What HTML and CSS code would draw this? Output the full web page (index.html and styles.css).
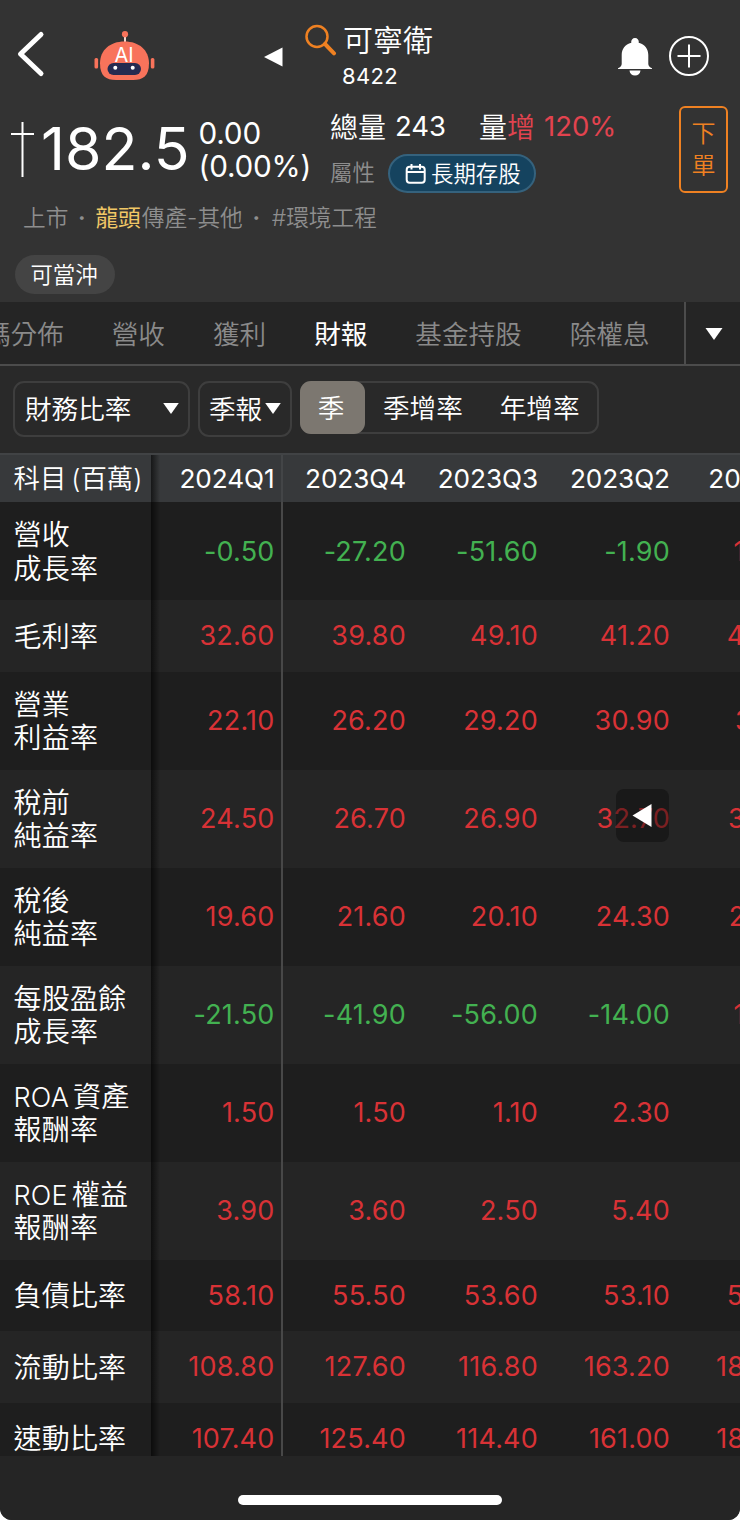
FILE: index.html
```html
<!DOCTYPE html>
<html lang="zh-Hant">
<head>
<meta charset="utf-8">
<title>可寧衛 8422</title>
<link rel="stylesheet" href="styles.css">
</head>
<body>
<div class="screen">
  <header class="top">
    <div class="nav">
      <svg class="back" width="30" height="48" viewBox="0 0 30 48"><path d="M26 4.500 5.500 24 26 43.500" fill="none" stroke="#fff" stroke-width="5" stroke-linecap="round" stroke-linejoin="round"/></svg>
      <svg class="robot" width="62" height="52" viewBox="0 0 62 52">
        <path d="M32 6v8" stroke="#f5d9d0" stroke-width="2"/>
        <circle cx="32" cy="4.200" r="3.100" fill="#f8735b"/>
        <rect x="1.500" y="28" width="3.600" height="10.500" rx="1.500" fill="#f8735b"/>
        <rect x="57.800" y="28" width="3.600" height="10.500" rx="1.500" fill="#f8735b"/>
        <path d="M31.500 11.500C46 11.500 56 20 56 33.500 56 46 50 50 40 50H23C13 50 7 46 7 33.500 7 20 17 11.500 31.500 11.500Z" fill="#f8735b"/>
        <text x="31" y="32" text-anchor="middle" class="robot-text">AI</text>
        <rect x="14.500" y="33" width="33.500" height="12" rx="6" fill="#262b50"/>
        <circle cx="22.300" cy="37.800" r="2" fill="#fff"/><circle cx="39.700" cy="37.800" r="2" fill="#fff"/>
      </svg>
      <svg class="prev" width="20" height="20" viewBox="0 0 20 20"><path d="M1 10 19.500 .5V19.500Z" fill="#fff"/></svg>
      <svg class="search" width="32" height="32" viewBox="0 0 32 32"><circle cx="12" cy="12.500" r="10.500" fill="none" stroke="#ef8122" stroke-width="2.500"/><path d="m20 20 9 9.300" stroke="#ef8122" stroke-width="4" stroke-linecap="round"/></svg>
      <div class="title"><div class="name">可寧衛</div><div class="code">8422</div></div>
      <svg class="bell" width="36" height="40" viewBox="0 0 36 40"><path d="M18 1a3.800 3.800 0 0 1 3.700 4.700C28 7.500 31.300 12 31.300 18v9c0 2 1.500 3.200 3.700 4.200v.9H1v-.9c2.200-1 3.700-2.200 3.700-4.200v-9c0-6 3.300-10.500 9.600-12.300A3.800 3.800 0 0 1 18 1ZM12.500 33.500h11c-.3 3.200-2.500 5-5.500 5s-5.200-1.800-5.500-5Z" fill="#fff"/></svg>
      <svg class="plus" width="42" height="42" viewBox="0 0 42 42"><circle cx="21" cy="21" r="19" fill="none" stroke="#fff" stroke-width="2"/><path d="M9.500 21h23M21 9.500v23" stroke="#fff" stroke-width="2"/></svg>
    </div>
    <div class="quote">
      <svg class="candle" width="24" height="56" viewBox="0 0 24 56"><path d="M0 12h23M11.500 0v55" stroke="#fff" stroke-width="2" fill="none"/></svg>
      <div class="price">182.5</div>
      <div class="change"><div>0.00</div><div class="pct">(0.00%)</div></div>
      <div class="facts">
        <div class="volume"><span>總量</span><span class="num">243</span><span class="vol-label">量</span><span class="up">增</span><span class="num up rate">120%</span></div>
        <div class="attr"><span class="attr-label">屬性</span>
          <span class="tag"><svg width="22" height="22" viewBox="0 0 22 22" fill="none" stroke="#fff" stroke-width="2"><rect x="1.700" y="3.700" width="18" height="16" rx="3"/><path d="M2 9h18M6.500 1v5.500M15 1v5.500"/></svg><span>長期存股</span></span>
        </div>
      </div>
      <button class="order"><span>下</span><span>單</span></button>
    </div>
    <div class="sector"><span>上市</span><i>·</i><b>龍頭</b><span>傳產-其他</span><i>·</i><span>#環境工程</span></div>
    <span class="chip">可當沖</span>
  </header>
  <nav class="tabs">
    <div class="tab-strip"><span>籌碼分佈</span><span>營收</span><span>獲利</span><span class="active">財報</span><span>基金持股</span><span>除權息</span></div>
    <div class="more"><svg width="18" height="12" viewBox="0 0 18 12"><path d="M.5 0h17L9 12Z" fill="#fff"/></svg></div>
  </nav>
  <div class="filters">
    <div class="select wide"><span>財務比率</span><svg width="16" height="11" viewBox="0 0 16 11"><path d="M.2 0h15.600L8 11Z" fill="#fff"/></svg></div>
    <div class="select"><span>季報</span><svg width="16" height="11" viewBox="0 0 16 11"><path d="M.2 0h15.600L8 11Z" fill="#fff"/></svg></div>
    <div class="segment"><span class="on">季</span><span class="quarter">季增率</span><span class="year">年增率</span></div>
  </div>
  <main class="table">
    <div class="row head"><div class="label">科目<span class="paren">(</span>百萬<span class="paren-end">)</span></div><div>2024Q1</div><div>2023Q4</div><div>2023Q3</div><div>2023Q2</div><div>2023Q1</div></div>
    <div class="row tall down"><div class="label">營收<br>成長率</div><div>-0.50</div><div>-27.20</div><div>-51.60</div><div>-1.90</div><div class="rise">14.60</div></div>
    <div class="row alt"><div class="label">毛利率</div><div>32.60</div><div>39.80</div><div>49.10</div><div>41.20</div><div>40.90</div></div>
    <div class="row tall"><div class="label">營業<br>利益率</div><div>22.10</div><div>26.20</div><div>29.20</div><div>30.90</div><div>31.70</div></div>
    <div class="row tall alt"><div class="label">稅前<br>純益率</div><div>24.50</div><div>26.70</div><div>26.90</div><div>32.70</div><div>32.50</div></div>
    <div class="row tall"><div class="label">稅後<br>純益率</div><div>19.60</div><div>21.60</div><div>20.10</div><div>24.30</div><div>25.00</div></div>
    <div class="row tall alt down"><div class="label">每股盈餘<br>成長率</div><div>-21.50</div><div>-41.90</div><div>-56.00</div><div>-14.00</div><div class="rise">14.80</div></div>
    <div class="row tall"><div class="label"><span class="latin">ROA</span>資產<br>報酬率</div><div>1.50</div><div>1.50</div><div>1.10</div><div>2.30</div><div></div></div>
    <div class="row tall alt"><div class="label"><span class="latin">ROE</span>權益<br>報酬率</div><div>3.90</div><div>3.60</div><div>2.50</div><div>5.40</div><div></div></div>
    <div class="row"><div class="label">負債比率</div><div>58.10</div><div>55.50</div><div>53.60</div><div>53.10</div><div>52.40</div></div>
    <div class="row alt"><div class="label">流動比率</div><div>108.80</div><div>127.60</div><div>116.80</div><div>163.20</div><div>186.40</div></div>
    <div class="row"><div class="label">速動比率</div><div>107.40</div><div>125.40</div><div>114.40</div><div>161.00</div><div>184.20</div></div>
    <div class="float"><svg width="20" height="23" viewBox="0 0 20 23"><path d="M.5 11.500 19.500 0V23Z" fill="#fff"/></svg></div>
  </main>
  <footer class="bottom"><div class="home"></div></footer>
</div>
</body>
</html>
```
FILE: styles.css
```css
* { box-sizing: border-box; }
body { margin: 0; background: #fff; }
.screen {
  width: 740px; height: 1520px; overflow: hidden;
  display: flex; flex-direction: column;
  background: #252525; color: #fff;
  border-radius: 0 0 12px 12px;
  font-family: Inter, "Noto Sans CJK TC", sans-serif;
  font-weight: 350;
}
svg { display: block; flex: none; }
.top { height: 302px; flex: none; background: #333; }

.nav { display: flex; align-items: flex-start; height: 104px; }
.back { margin: 30px 0 0 15px; }
.robot { margin: 30px 0 0 48px; }
.robot-text { font: 400 20px Inter, sans-serif; fill: #fff; }
.prev { margin: 47px 0 0 108px; }
.search { margin: 24px 0 0 22px; }
.title { width: 100px; margin: 19px 0 0 6px; white-space: nowrap; }
.name { font-size: 30px; line-height: 42px; }
.code { margin-left: -1px; font-size: 22px; line-height: 30px; letter-spacing: .3px; font-weight: 370; }
.bell { margin: 37px 0 0 174px; }
.plus { margin: 35px 0 0 15px; }

.quote { display: flex; align-items: flex-start; height: 94px; white-space: nowrap; }
.candle { margin: 18px 0 0 11px; }
.price { width: 156px; margin: 13px 0 0 6px; font-size: 59px; line-height: 64px; font-weight: 370; }
.change { width: 131px; margin-top: 13px; font-size: 29.700px; line-height: 33px; padding-left: 1.500px; font-weight: 375; letter-spacing: -.2px; }
.facts { width: 351px; padding-left: 2px; }
.volume { display: flex; align-items: center; height: 44px; font-size: 28px; }
.volume .num { font-size: 27.500px; margin-left: 9px; width: 84px; font-weight: 370; }
.up { color: #e2434f; }
.attr { display: flex; align-items: center; margin-top: 6px; height: 39px; }
.attr-label { font-size: 22.400px; color: #8e8e8e; width: 58px; height: 35px; line-height: 33px; }
.tag {
  display: flex; align-items: center; gap: 4px; width: 148px; height: 39px;
  padding-left: 15px; border: 2px solid #35627d; border-radius: 20px;
  background: #15435f; font-size: 22.400px; line-height: 32px;
}
.order {
  display: flex; flex-direction: column; align-items: center; justify-content: center;
  width: 49px; height: 87px; margin: 2px 0 0; padding: 0 0 3px;
  border: 2px solid #ef8122; border-radius: 6px; background: none;
  color: #ef8122; font: 350 24px/32px "Noto Sans CJK TC", sans-serif;
}
.sector { display: flex; padding-left: 23px; height: 38px; line-height: 39px; font-size: 22.700px; color: #8e8e8e; }
.sector i { width: 27px; text-align: center; font-style: normal; font-weight: 700; }
.sector i + span { padding-left: 2px; }
.sector b { font-weight: 400; color: #f0c766; padding-right: 1px; }
.chip {
  display: block; width: 100px; height: 39px; margin: 19px 0 0 15px; padding-right: 2px;
  border-radius: 20px; background: #444; text-align: center;
  font-size: 22.400px; line-height: 40px;
}

.tabs { display: flex; flex: none; height: 64px; border-bottom: 2px solid #4c4c4c; background: #252525; }
.tab-strip {
  display: flex; justify-content: flex-end; gap: 48px; width: 684px; padding-right: 34.500px;
  overflow: hidden; white-space: nowrap; font-size: 26.600px; line-height: 65px; color: #8a8a8a;
}
.tab-strip span { flex: none; }
.tab-strip .active { color: #fff; font-weight: 400; }
.more { display: flex; width: 56px; padding: 26px 0 0 19px; border-left: 2px solid #4c4c4c; }

.filters { display: flex; flex: none; height: 87px; padding: 15px 13px; font-size: 26.600px; white-space: nowrap; background: #292929; }
.select {
  display: flex; align-items: center; gap: 3px; width: 94px; height: 56px; margin-right: 8px;
  padding: 0 0 1px 9px; border: 2px solid #3e3e3e; border-radius: 11px;
}
.select > span { padding-bottom: 2px; }
.select.wide { justify-content: space-between; width: 177px; padding: 0 9px 1px 10px; }
.segment { display: flex; width: 299px; height: 53px; border: 2px solid #3e3e3e; border-radius: 11px; line-height: 51px; }
.segment .on { width: 65px; height: 53px; margin: -2px 0 0 -2px; padding-right: 3px; border-radius: 11px; background: #7c7770; text-align: center; line-height: 54px; }
.quarter { margin-left: 18px; }
.year { margin-left: 37px; }

.table { position: relative; flex: none; height: 1003px; overflow: hidden; }
.row {
  display: grid; grid-template-columns: 151px 131px repeat(4, 132px); align-items: stretch;
  width: 810px; height: 71.500px; background: #1e1e1e; color: #d83236; font-size: 27px;
  letter-spacing: .2px; font-weight: 375;
}
.row.tall { height: 98px; }
.row.alt { background: #252525; }
.row.down { color: #43b151; }
.row > div { display: flex; align-items: center; justify-content: flex-end; padding-right: 8px; }
.row > div:nth-child(2) {
  border-right: 2px solid #484848; padding-right: 6.500px; width: 132px;
  background: linear-gradient(90deg, #0009, #0000 9px);
}
.row > .label { display: block; align-self: center; padding: 3px 0 0 13.500px; color: #fff; font-size: 28px; line-height: 33.500px; letter-spacing: .2px; font-weight: 350; white-space: nowrap; }
.row.head { height: 49px; background: #37393b; color: #fff; font-size: 26.200px; letter-spacing: -.1px; border-top: 2px solid #414345; }
.head > div { padding-bottom: 1px; }
.row.head > .label { font-size: 26.400px; padding-top: 0; letter-spacing: 0; }
.head > div:nth-child(2) { border-right-color: #434547; }
.row > .rise { color: #d83236; }
.paren { margin-left: 5px; }
.latin { font-size: 27px; margin-right: 4px; }
.row > div:last-child { padding-right: 7px; }
.float {
  position: absolute; left: 616px; top: 336px; width: 53px; height: 53px;
  display: flex; align-items: center; padding: 0 0 0 16px;
  border-radius: 8px; background: rgba(10,10,10,.45);
}
.bottom { flex: 1; padding-top: 39px; background: #252525; }
.home { width: 264px; height: 10px; margin: 0 auto; border-radius: 5px; background: #fff; }
```
